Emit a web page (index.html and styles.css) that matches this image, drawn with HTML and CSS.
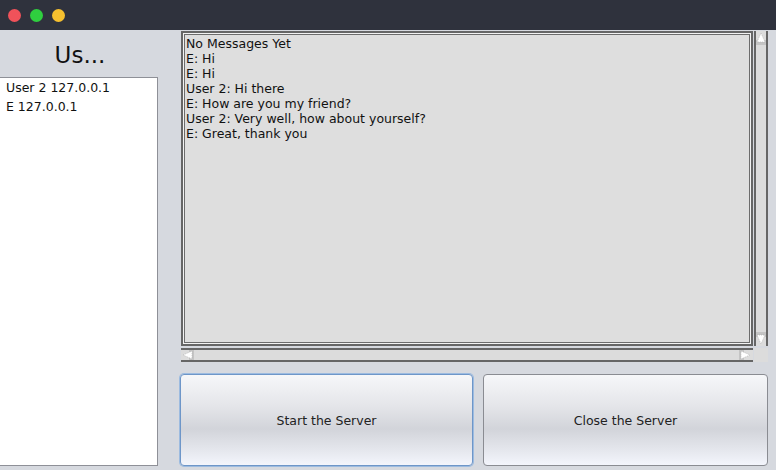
FILE: index.html
```html
<!DOCTYPE html>
<html>
<head>
<meta charset="utf-8">
<link rel="stylesheet" href="styles.css">
</head>
<body>
<div class="titlebar">
  <span class="dot red"></span>
  <span class="dot green"></span>
  <span class="dot yellow"></span>
</div>
<div class="main">
  <div class="left">
    <div class="heading">Us...</div>
    <div class="list">
      <div class="item">User 2 127.0.0.1</div>
      <div class="item">E 127.0.0.1</div>
    </div>
  </div>
  <div class="right">
    <div class="scrollpane">
      <div class="viewport">
        <div class="line">No Messages Yet</div>
        <div class="line">E: Hi</div>
        <div class="line">E: Hi</div>
        <div class="line">User 2: Hi there</div>
        <div class="line">E: How are you my friend?</div>
        <div class="line">User 2: Very well, how about yourself?</div>
        <div class="line">E: Great, thank you</div>
      </div>
      <div class="vbar">
        <svg class="arrow" width="10" height="13" viewBox="0 0 10 13"><rect x="0" y="8" width="10" height="5" fill="#c4c4c4"/><polygon points="5,1 9,10 1,10" fill="#fff" stroke="#aaa" stroke-width="0.6" stroke-dasharray="1 1"/></svg>
        <svg class="arrow" width="10" height="13" viewBox="0 0 10 13"><rect x="0" y="0" width="10" height="5" fill="#c4c4c4"/><polygon points="1,3 9,3 5,12" fill="#fff" stroke="#aaa" stroke-width="0.6" stroke-dasharray="1 1"/></svg>
      </div>
      <div class="hbar">
        <svg class="harrow" width="12" height="10" viewBox="0 0 12 10"><rect x="7" y="0" width="5" height="10" fill="#c4c4c4"/><polygon points="1,5 10,1 10,9" fill="#fff" stroke="#aaa" stroke-width="0.6" stroke-dasharray="1 1"/></svg>
        <svg class="harrow" width="13" height="10" viewBox="0 0 13 10"><rect x="0" y="0" width="5" height="10" fill="#c4c4c4"/><polygon points="2,1 11,5 2,9" fill="#fff" stroke="#aaa" stroke-width="0.6" stroke-dasharray="1 1"/></svg>
      </div>
      <div class="corner"></div>
    </div>
    <div class="buttons">
      <button class="btn focused">Start the Server</button>
      <button class="btn">Close the Server</button>
    </div>
  </div>
</div>
</body>
</html>
```

FILE: styles.css
```css
html, body {
  margin: 0;
  padding: 0;
}
body {
  width: 776px;
  height: 470px;
  background: #d6d9df;
  font-family: "DejaVu Sans", "Liberation Sans", sans-serif;
  font-size: 12.5px;
  color: #111;
  overflow: hidden;
}
.titlebar {
  height: 30px;
  background: #2f323d;
  display: flex;
  align-items: center;
  gap: 9px;
  padding-left: 8px;
  box-sizing: border-box;
}
.dot {
  width: 13px;
  height: 13px;
  border-radius: 50%;
  display: block;
}
.red { background: #f0525a; }
.green { background: #2fcf3f; }
.yellow { background: #f6c02f; }

.main {
  display: flex;
  height: 436px;
  gap: 22px;
}
.left {
  width: 158px;
  display: flex;
  flex-direction: column;
}
.heading {
  height: 47px;
  display: flex;
  align-items: center;
  justify-content: center;
  font-size: 23px;
  color: #111;
  box-sizing: border-box;
  padding-top: 3px;
  padding-left: 2px;
}
.list {
  height: 389px;
  background: #fff;
  border: 1px solid #8e9097;
  border-left: none;
  box-sizing: border-box;
  padding-top: 0;
}
.item {
  height: 19px;
  line-height: 19px;
  padding-left: 6px;
}
.right {
  width: 588px;
  display: flex;
  flex-direction: column;
  padding-top: 1px;
}
.scrollpane {
  margin-left: 1px;
  display: grid;
  grid-template-columns: 572px 14px;
  grid-template-rows: 315px 14px;
  column-gap: 1px;
  row-gap: 2px;
  height: 331px;
}
.viewport {
  background: #dedede;
  border: 2px solid #666;
  box-shadow: inset 0 0 0 1px #f2f2f2, inset 0 0 0 2px #6c6c6c;
  padding: 3px 0 0 3px;
  box-sizing: border-box;
}
.line {
  height: 15px;
  line-height: 15px;
  white-space: nowrap;
}
.vbar {
  background: #dcdcdc;
  border-left: 2px solid #666;
  border-right: 2px solid #666;
  display: flex;
  flex-direction: column;
  justify-content: space-between;
  align-items: center;
  padding: 1px 0;
}
.arrow { display: block; }
.hbar {
  background: #dcdcdc;
  border-top: 2px solid #666;
  border-bottom: 2px solid #666;
  display: flex;
  justify-content: space-between;
  align-items: center;
  padding: 0 1px;
  box-sizing: border-box;
}
.harrow { display: block; }
.corner {
  background: #dcdcdc;
}
.buttons {
  margin-top: 12px;
  display: flex;
  gap: 10px;
  height: 93px;
}
.btn {
  font-family: "DejaVu Sans", "Liberation Sans", sans-serif;
  font-size: 12.5px;
  color: #222;
  border: 1px solid #8a8c92;
  border-radius: 4px;
  background: linear-gradient(to bottom, #f6f7f9 0%, #e4e5e9 35%, #d2d4da 60%, #e2e4ea 80%, #f3f5fc 100%);
  padding: 0;
  margin: 0;
}
.btn:first-child { width: 293px; }
.btn:last-child { width: 285px; }
.focused {
  border: 1px solid #6e96c8;
  box-shadow: 0 0 0 1px #9cbbe0;
}
```
